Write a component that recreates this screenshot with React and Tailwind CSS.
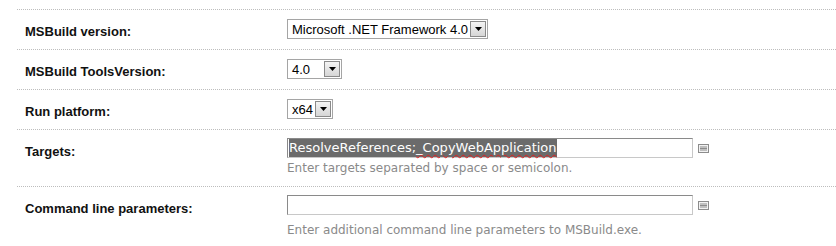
const selectArrow = (
  <span className="flex h-[16px] w-[16px] items-center justify-center border border-[#8a8a8a] bg-gradient-to-b from-[#f4f4f4] to-[#d6d6d6]">
    <svg width="7" height="4" viewBox="0 0 7 4">
      <path d="M0 0h7L3.5 4z" fill="#000" />
    </svg>
  </span>
);

function Select({ value, width }) {
  return (
    <div
      className={`flex h-[20px] items-center justify-between border border-[#a5a5a5] bg-white pl-[4px] pr-[1px] font-['Liberation_Sans',sans-serif] text-[13px] text-black ${width}`}
    >
      <span className="whitespace-nowrap leading-none">{value}</span>
      {selectArrow}
    </div>
  );
}

function NoteIcon() {
  return (
    <svg width="11" height="9" viewBox="0 0 11 9" className="ml-[5px] mt-[6px]">
      <rect x="0.5" y="0.5" width="10" height="8" fill="#f2f2f2" stroke="#8c8c8c" />
      <path d="M2 3h7M2 4.5h7M2 6h7" stroke="#8c8c8c" strokeWidth="1" />
    </svg>
  );
}

function Row({ label, children, height = "h-[40px]", pad = "pt-[9px]" }) {
  return (
    <div className={`flex border-t border-dotted border-[#bdbdbd] ${height}`}>
      <div className="w-[270px] shrink-0 pl-[8px] pt-[14px] font-['Liberation_Sans',sans-serif] text-[13px] font-bold leading-[15px] text-[#111]">
        {label}
      </div>
      <div className={pad}>{children}</div>
    </div>
  );
}

export default function App() {
  return (
    <div className="h-[246px] w-[836px] overflow-hidden bg-white pl-[17px] pt-[9px] font-['DejaVu_Sans',sans-serif]">
      <Row label="MSBuild version:">
        <Select value="Microsoft .NET Framework 4.0" width="w-[201px]" />
      </Row>
      <Row label="MSBuild ToolsVersion:">
        <Select value="4.0" width="w-[55px]" />
      </Row>
      <Row label="Run platform:">
        <Select value="x64" width="w-[46px]" />
      </Row>
      <Row label="Targets:" height="h-[57px]" pad="pt-[8px]">
        <div className="flex">
          <div className="flex h-[20px] w-[406px] items-center border border-[#c8c8c8] border-l-[#8a8a8a] border-t-[#8a8a8a] bg-white pl-[1px] text-[13px]">
            <span className="whitespace-nowrap bg-[#6b6b6b] leading-[18px] text-white">
              ResolveReferences;
              <span className="underline decoration-[#e02020] decoration-wavy decoration-1 underline-offset-2">
                _CopyWebApplication
              </span>
            </span>
          </div>
          <NoteIcon />
        </div>
        <div className="mt-[3px] text-[12px] leading-[14px] text-[#8a8a8a]">
          Enter targets separated by space or semicolon.
        </div>
      </Row>
      <Row label="Command line parameters:" height="h-[60px]" pad="pt-[8px]">
        <div className="flex">
          <div className="h-[20px] w-[406px] border border-[#c8c8c8] border-l-[#8a8a8a] border-t-[#8a8a8a] bg-white" />
          <NoteIcon />
        </div>
        <div className="mt-[8px] text-[12px] leading-[14px] text-[#8a8a8a]">
          Enter additional command line parameters to MSBuild.exe.
        </div>
      </Row>
    </div>
  );
}
